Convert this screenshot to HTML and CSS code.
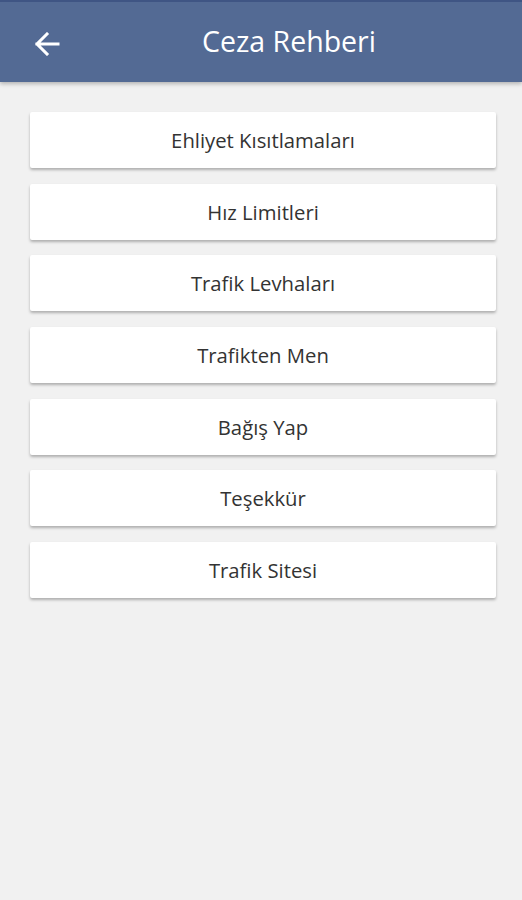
FILE: index.html
```html
<!DOCTYPE html>
<html>
<head>
<meta charset="utf-8">
<link rel="stylesheet" href="styles.css">
</head>
<body>
<header class="appbar">
  <svg class="back" width="26" height="24" viewBox="0 0 26 24"><path d="M24 12H3M13 2L3 12l10 10" fill="none" stroke="#fff" stroke-width="3" stroke-linecap="square"/></svg>
  <h1 class="title">Ceza Rehberi</h1>
</header>
<main class="list">
  <div class="card">Ehliyet Kısıtlamaları</div>
  <div class="card">Hız Limitleri</div>
  <div class="card">Trafik Levhaları</div>
  <div class="card">Trafikten Men</div>
  <div class="card">Bağış Yap</div>
  <div class="card">Teşekkür</div>
  <div class="card">Trafik Sitesi</div>
</main>
</body>
</html>
```
FILE: styles.css
```css
html, body { margin: 0; padding: 0; }
body {
  width: 522px;
  height: 900px;
  background: #f1f1f1;
  font-family: "Open Sans", "Noto Sans", sans-serif;
  overflow: hidden;
}
.appbar {
  height: 82px;
  background: #536a94;
  border-top: 2px solid #3f5584;
  box-sizing: border-box;
  position: relative;
  display: flex;
  align-items: center;
  justify-content: center;
  box-shadow: 0 2px 4px rgba(0,0,0,0.25);
}
.back {
  position: absolute;
  left: 34px;
  top: 30px;
}
.title {
  margin: 0;
  color: #fff;
  font-weight: 400;
  font-size: 28.5px;
  padding-left: 56px;
  margin-top: -2px;
}
.list {
  display: flex;
  flex-direction: column;
  gap: 15.67px;
  padding: 30px 26px 0 30px;
}
.card {
  height: 56px;
  background: #fff;
  box-shadow: 0 2px 3px rgba(0,0,0,0.28);
  border-radius: 2px;
  display: flex;
  align-items: center;
  justify-content: center;
  font-size: 20.3px;
  color: #333;
}
```
